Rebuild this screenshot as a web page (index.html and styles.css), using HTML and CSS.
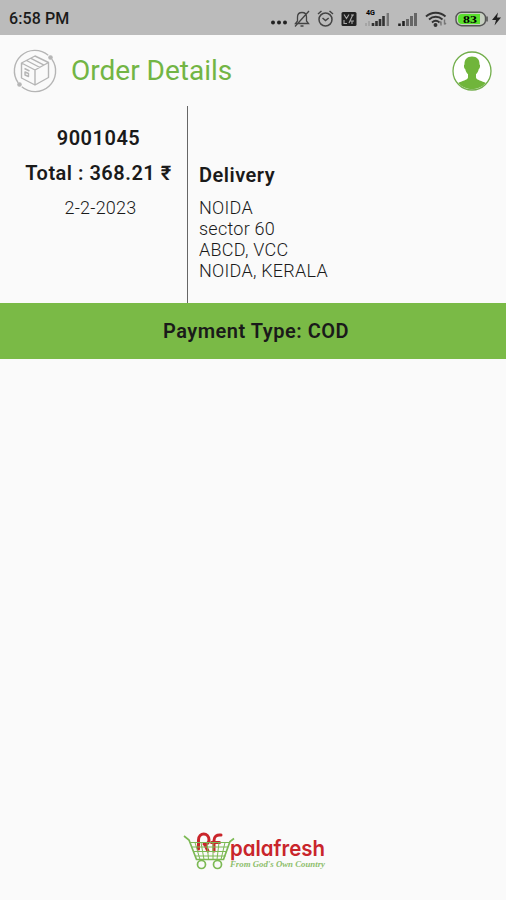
FILE: index.html
```html
<!DOCTYPE html>
<html lang="en">
<head>
    <meta charset="UTF-8">
    <meta name="viewport" content="width=device-width, initial-scale=1.0">
    <title>Order Details</title>
    <link rel="stylesheet" href="styles.css">
</head>
<body>
    <div class="status-bar">
        <span class="time">6:58 PM</span>
        <div class="status-icons">
            <svg width="18" height="20" viewBox="0 0 18 20" fill="#222">
                <circle cx="2" cy="13.500" r="2"/><circle cx="8" cy="13.500" r="2"/><circle cx="14" cy="13.500" r="2"/>
            </svg>
            <svg class="bell" width="17" height="20" viewBox="0 0 17 20" fill="none" stroke="#444" stroke-width="1.3">
                <path d="M1.500 14.500h13l-2-2.500V8c0-2.500-1.500-4.500-4.500-4.500S3.500 5.500 3.500 8v4zM6.500 17h3M15 2L1 17.500"/>
            </svg>
            <svg class="alarm" width="17" height="20" viewBox="0 0 17 20" fill="none" stroke="#444" stroke-width="1.5">
                <circle cx="8.500" cy="10.500" r="6.500"/>
                <path d="M1 5l3.500-3M16 5l-3.500-3M5.500 9l3 2.500 3.200-2.500"/>
            </svg>
            <svg class="volte" width="16" height="20" viewBox="0 0 16 20">
                <rect x="0.500" y="3" width="15" height="14" rx="1.500" fill="#222"/>
                <path d="M3 5.500l2.500 4 2.500-4M8 14l4-8.500M3 11v3.500h3M9 12h4M11 12v3M10 6h3" fill="none" stroke="#aaa" stroke-width="1.100"/>
            </svg>
            <svg class="signal-4g" width="24" height="20" viewBox="0 0 24 20">
                <text x="0" y="5.500" class="net" textLength="9" lengthAdjust="spacingAndGlyphs">4G</text>
                <path d="M0 14v3M3 12v5" stroke="#999" stroke-width="1.300"/>
                <path d="M7 14v3M10.500 12v5M14 10v7M17.500 7v10" stroke="#333" stroke-width="2.600"/>
                <path d="M21.800 4v13" stroke="#777" stroke-width="2.400"/>
            </svg>
            <svg class="signal" width="20" height="20" viewBox="0 0 20 20">
                <path d="M1.500 14.500V17M5.500 12v5" stroke="#222" stroke-width="2.600"/>
                <path d="M9.500 10v7M13.500 7v10M17.500 4v13" stroke="#666" stroke-width="3"/>
            </svg>
            <svg class="wifi" width="23" height="20" viewBox="0 0 23 20" fill="none" stroke="#333" stroke-width="1.900">
                <path d="M1 7.500c5.500-5 14-5 19.500 0M4 10.500c4-3.600 9.500-3.600 13.500 0M7 13.500c2.200-2 5.300-2 7.500 0"/>
                <circle cx="10.500" cy="16" r="1" fill="#333"/>
                <path d="M16 16.500v-4M14.500 14l1.500-1.500M19.500 10.500v5M21 14l-1.500 1.500" stroke="#777" stroke-width="1.400"/>
            </svg>
            <svg class="battery" width="34" height="20" viewBox="0 0 34 20">
                <rect x="1" y="3.300" width="29.500" height="13.400" rx="5.500" fill="#c6cfc0" stroke="#555" stroke-width="1.400"/>
                <path d="M7 5h18v10H7a4 4 0 0 1-4-4V9a4 4 0 0 1 4-4z" fill="#59df2d"/>
                <path d="M32 7.500v5" stroke="#555" stroke-width="1.600"/>
                <text x="8" y="14" class="level" textLength="14" lengthAdjust="spacingAndGlyphs">83</text>
            </svg>
            <svg class="bolt" width="9" height="20" viewBox="0 0 9 20" fill="#222">
                <path d="M6 3.500L0 11h4l-1.500 5.500L9 8.500H5z"/>
            </svg>
        </div>
    </div>

    <header class="header">
        <svg class="box-icon" width="44" height="44" viewBox="0 0 44 44" fill="none" stroke="#b5b5b5" stroke-width="1.400" stroke-linejoin="round">
            <path d="M5.200 33.800A20.500 20.500 0 0 1 35.200 6.300M38.800 10.200A20.500 20.500 0 0 1 8.800 37.700"/>
            <path d="M22 7l13.500 6.500v15L22 36 8.500 29V14zM8.500 14L22 21l13.500-7.500M22 21v15M13.500 11.500l13.500 7M17.500 9.200l13.500 7"/>
            <path d="M11.500 19.500l5 2.500M12 23l3.500 1.500v3L12 26z"/>
            <circle cx="37.500" cy="8.500" r="1.600" fill="#b5b5b5"/>
            <circle cx="6.500" cy="35.500" r="1.600" fill="#b5b5b5"/>
        </svg>
        <h1>Order Details</h1>
        <svg class="profile" width="40" height="40" viewBox="0 0 40 40">
            <circle cx="20" cy="20" r="19" fill="#fff" stroke="#72ae4b" stroke-width="1.300"/>
            <path d="M20 5.500c-5 0-7.800 3-7.500 8-1 .5-.6 4 .8 4.700.4 2 1.300 3.800 2.700 5v3.300c0 2.500-6.500 3.500-9.800 5.500A18.500 18.500 0 0 0 33.800 32c-3.300-2-9.800-3-9.800-5.500v-3.300c1.400-1.200 2.300-3 2.700-5 1.400-.7 1.800-4.200.8-4.700.3-5-2.500-8-7.500-8z" fill="#70b53b"/>
        </svg>
    </header>

    <div class="order">
        <div class="summary">
            <p class="order-id">9001045</p>
            <p class="total">Total : 368.21 ₹</p>
            <p class="date">2-2-2023</p>
        </div>
        <div class="delivery">
            <h2>Delivery</h2>
            <p>NOIDA<br>sector 60<br>ABCD, VCC<br>NOIDA, KERALA</p>
        </div>
    </div>

    <div class="payment">Payment Type: COD</div>

    <footer class="footer">
        <svg width="144" height="42" viewBox="0 0 144 42">
            <g fill="none" stroke="#c9252b" stroke-width="3" stroke-linecap="round">
                <path d="M15.500 20V11c0-8 10.500-8 10.500 0 0 3-2 4-5 4M22 16l3 6"/>
                <path d="M31 22V11.500c0-4 2.500-6 7-5.500M28.500 13.500h8"/>
            </g>
            <g fill="none" stroke="#7cb954" stroke-width="1">
                <path d="M1 7l5 4 7.500 19.500h27l6.500-18 4-3" stroke-width="1.700"/>
                <path d="M7 13.500h39M9 18h36M11 22.500h33M12.500 27h30M12 13.500l5 17M18 13.500l3 17M24 13.500l1.500 17M30 13.500v17M36 13.500l-2 17M42 13.500l-4 17"/>
                <circle cx="18.500" cy="35.500" r="4" stroke-width="1.700"/>
                <circle cx="34.500" cy="35.500" r="4" stroke-width="1.700"/>
            </g>
            <text x="47" y="27" class="brand" textLength="95" lengthAdjust="spacingAndGlyphs">palafresh</text>
            <text x="47" y="37.500" class="tagline" textLength="95" lengthAdjust="spacingAndGlyphs">From God's Own Country</text>
        </svg>
    </footer>
</body>
</html>
```
FILE: styles.css
```css
* {
    box-sizing: border-box;
}
body {
    margin: 0;
    height: 100vh;
    display: flex;
    flex-direction: column;
    background-color: #fafafa;
    color: #1a1a1a;
    font-family: Roboto, sans-serif;
}
h1, h2, p {
    margin: 0;
}
svg {
    display: block;
    flex: none;
    overflow: visible;
}
.status-bar {
    height: 35px;
    padding: 2px 5px 0 9px;
    display: flex;
    align-items: center;
    justify-content: space-between;
    background-color: #bbb;
}
.time {
    font-size: 16px;
    font-weight: 500;
    letter-spacing: 0.1px;
}
.status-icons {
    display: flex;
}
.bell {
    margin-left: 5px;
}
.alarm {
    margin-left: 6px;
}
.volte {
    margin-left: 7px;
}
.signal-4g {
    margin-left: 9px;
}
.signal {
    margin-left: 8px;
}
.wifi {
    margin-left: 7px;
}
.battery {
    margin-left: 7px;
}
.bolt {
    margin-left: 3px;
}
.net {
    font-size: 7px;
    font-weight: bold;
}
.level {
    font: bold 11px "Liberation Serif", serif;
}
.header {
    height: 71px;
    padding: 0 14px;
    display: flex;
    align-items: center;
}
.box-icon {
    margin-left: -1px;
}
.header h1 {
    margin-left: 14px;
    font-size: 28px;
    font-weight: 400;
    color: #72b544;
}
.profile {
    margin-left: auto;
}
.order {
    height: 197px;
    display: flex;
}
.summary {
    width: 188px;
    padding: 19px 0 0 10px;
    border-right: 1px solid #666;
    text-align: center;
}
.order-id, .total, .delivery h2 {
    font-size: 20px;
    line-height: 26px;
    font-weight: 600;
    letter-spacing: 0.5px;
}
.total {
    margin-top: 9px;
}
.date {
    margin: 11px 0 0 4px;
    font-size: 18px;
    line-height: 21px;
    font-weight: 300;
    letter-spacing: 0.2px;
}
.delivery {
    padding: 56px 0 0 11px;
}
.delivery p {
    margin-top: 9px;
    font-size: 18px;
    line-height: 21px;
    font-weight: 300;
    letter-spacing: 0.25px;
}
.payment {
    height: 56px;
    padding-left: 6px;
    display: flex;
    align-items: center;
    justify-content: center;
    background-color: #7aba46;
    font-size: 20px;
    font-weight: 600;
    letter-spacing: 0.5px;
}
.footer {
    margin-top: auto;
    padding: 0 0 29px 3px;
    display: flex;
    justify-content: center;
}
.brand {
    font: 600 22px Inter, sans-serif;
    font-feature-settings: "cv11", "ss03";
    fill: #c9252b;
}
.tagline {
    font: italic bold 8px "Liberation Serif", serif;
    fill: #8dbe6b;
}
```
